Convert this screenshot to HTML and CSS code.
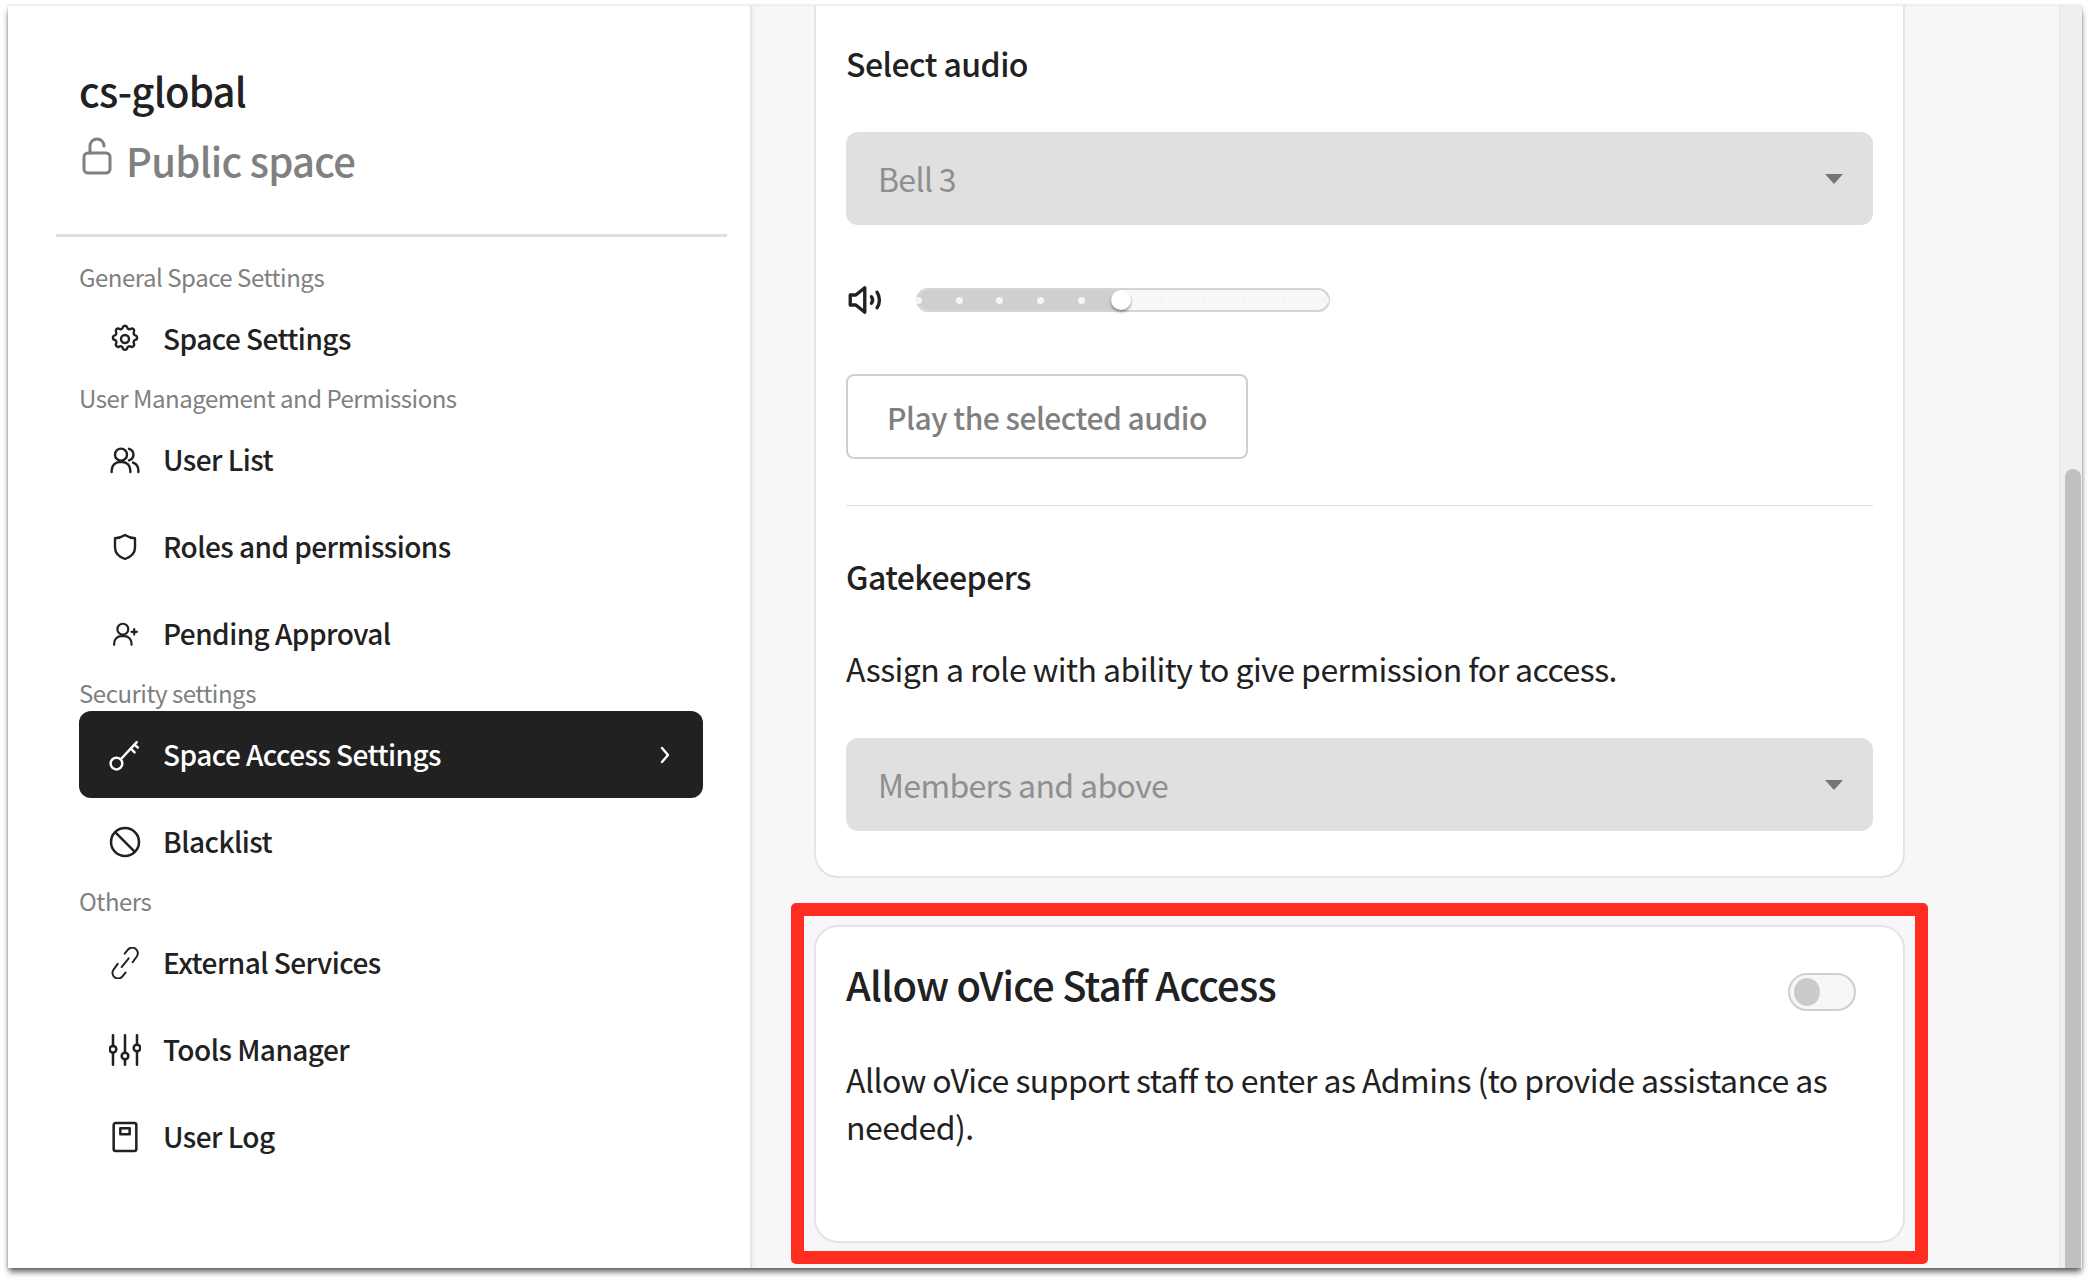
FILE: index.html
```html
<!DOCTYPE html>
<html lang="en">
<head>
<meta charset="utf-8">
<title>Space Access Settings</title>
<link rel="stylesheet" href="styles.css">
</head>
<body>
<div class="window">
  <aside class="sidebar">
    <header class="space-head">
      <div class="space-name">cs-global</div>
      <div class="space-type">
        <svg class="lock" viewBox="0 0 30 40" fill="none" stroke="currentColor" stroke-width="3" stroke-linejoin="round" stroke-linecap="round"><rect x="2" y="16" width="26" height="20" rx="4"/><path d="M8 16V9a7 7 0 0 1 14 0"/></svg>
        <span>Public space</span>
      </div>
    </header>
    <hr class="head-rule">
    <nav class="nav">
      <div class="nav-label">General Space Settings</div>
      <a class="nav-row">
        <svg class="ico" viewBox="0 0 24 24"><path d="M10.300 3.300c.4-1.700 3-1.700 3.400 0a1.700 1.700 0 0 0 2.600 1.100c1.500-.9 3.300.8 2.400 2.400a1.700 1.700 0 0 0 1 2.500c1.800.4 1.800 3 0 3.400a1.700 1.700 0 0 0-1 2.600c.9 1.500-.9 3.300-2.400 2.400a1.700 1.700 0 0 0-2.600 1c-.4 1.800-3 1.800-3.400 0a1.700 1.700 0 0 0-2.600-1c-1.500.9-3.300-.9-2.400-2.400a1.700 1.700 0 0 0-1-2.600c-1.800-.4-1.800-3 0-3.400a1.700 1.700 0 0 0 1-2.500c-.9-1.600.9-3.300 2.400-2.400a1.700 1.700 0 0 0 2.600-1.100z"/><circle cx="12" cy="12" r="3"/></svg>
        <span>Space Settings</span>
      </a>
      <div class="nav-label">User Management and Permissions</div>
      <a class="nav-row">
        <svg class="ico" viewBox="0 0 24 24"><circle cx="9" cy="8" r="4.500"/><path d="M2 21v-1.500a6 6 0 0 1 6-6h2a6 6 0 0 1 6 6V21"/><path d="M15 3.600a4.500 4.500 0 0 1 0 8.700"/><path d="M22 21v-1.500a6 6 0 0 0-4-5.600"/></svg>
        <span>User List</span>
      </a>
      <a class="nav-row">
        <svg class="ico" viewBox="0 0 24 24"><path d="M12 3c2.600 1.700 5 2.400 7.500 2.400v6.900c0 4.300-3 7-7.500 8.700-4.500-1.700-7.500-4.400-7.500-8.700V5.400C7 5.400 9.400 4.700 12 3z"/></svg>
        <span>Roles and permissions</span>
      </a>
      <a class="nav-row">
        <svg class="ico ico-small" viewBox="0 0 24 24"><circle cx="10" cy="7.500" r="5"/><path d="M2 22v-1.500a6.500 6.500 0 0 1 6.500-6.500h3a6.500 6.500 0 0 1 6.500 6.500V22"/><path d="M18 10h5M20.500 7.500v5"/></svg>
        <span>Pending Approval</span>
      </a>
      <div class="nav-label">Security settings</div>
      <a class="nav-row is-active">
        <svg class="ico ico-key" viewBox="0 0 30 30"><circle cx="7" cy="23" r="5.500"/><path d="M11 19 26 3"/><path d="M20.500 9l3.500 3.500M24 5.500l3 2.500"/></svg>
        <span>Space Access Settings</span>
        <svg class="chev" viewBox="0 0 12 20"><path d="M3 3l6 7-6 7"/></svg>
      </a>
      <a class="nav-row">
        <svg class="ico ico-lg" viewBox="0 0 24 24"><circle cx="12" cy="12" r="10.500"/><path d="M5 5l14 14"/></svg>
        <span>Blacklist</span>
      </a>
      <div class="nav-label">Others</div>
      <a class="nav-row">
        <svg class="ico ico-link" viewBox="2 1.800 20.300 20.300"><path d="M10 14.500l4.500-5.500"/><path d="M12 6l2-2.500a3.500 3.500 0 0 1 5.500 4.500l-2.500 3.500"/><path d="M12.500 18l-2 2.500A3.500 3.500 0 0 1 5 16l2.500-3.500"/></svg>
        <span>External Services</span>
      </a>
      <a class="nav-row">
        <svg class="ico ico-lg" viewBox="0 0 24 24"><path d="M3 1v8M3 14v9M12 1v13M12 19v4M21 1v7M21 13v10"/><circle cx="3" cy="11.500" r="2.500"/><circle cx="12" cy="16.500" r="2.500"/><circle cx="21" cy="10.500" r="2.500"/></svg>
        <span>Tools Manager</span>
      </a>
      <a class="nav-row">
        <svg class="ico ico-lg" viewBox="0 0 24 24"><rect x="3.500" y="1.500" width="17" height="21" rx="1.500"/><rect x="8.500" y="5.500" width="7" height="4.500"/></svg>
        <span>User Log</span>
      </a>
    </nav>
  </aside>

  <main class="main">
    <section class="card card-audio">
      <h2 class="sub-title">Select audio</h2>
      <div class="select select-first"><span>Bell 3</span><i class="caret"></i></div>
      <div class="volume">
        <svg class="speaker" viewBox="0 0 34 26" fill="none" stroke="currentColor" stroke-width="3" stroke-linejoin="round" stroke-linecap="round"><path d="M2 8.500h5L15 2v22l-8-6.500H2z"/><path d="M21 10c1.300 1.800 1.300 4.200 0 6"/><path d="M26 6c2.800 4 2.800 10 0 14"/></svg>
        <div class="slider">
          <div class="slider-fill"></div>
          <div class="slider-dots"><i></i><i></i><i></i><i></i><i></i><i></i><i></i><i></i><i></i><i></i><i></i></div>
          <div class="slider-thumb"></div>
        </div>
      </div>
      <button class="play" type="button">Play the selected audio</button>
      <hr class="card-rule">
      <h2 class="sub-title gate-title">Gatekeepers</h2>
      <p class="gate-text">Assign a role with ability to give permission for access.</p>
      <div class="select select-gate"><span>Members and above</span><i class="caret"></i></div>
    </section>

    <section class="card card-staff">
      <div class="highlight"></div>
      <div class="staff-head">
        <h2 class="staff-title">Allow oVice Staff Access</h2>
        <div class="toggle"><i></i></div>
      </div>
      <p class="staff-text">Allow oVice support staff to enter as Admins (to provide assistance as needed).</p>
    </section>
  </main>

  <div class="scrollbar"><div class="scroll-thumb"></div></div>
</div>
</body>
</html>
```

FILE: styles.css
```css
* { box-sizing: border-box; }
html, body { height: 100%; }
body {
  margin: 0;
  padding: 6px 14px 16px 8px;
  background: #fff;
  overflow: hidden;
  font-family: "Noto Sans CJK JP", "Noto Sans", sans-serif;
  color: #212121;
}
.window {
  display: flex;
  height: 1262px;
  background: #f7f7f9;
  box-shadow: 0 5px 6px -1px rgba(0,0,0,.6), 0 0 3px rgba(0,0,0,.22);
  overflow: hidden;
}
.sidebar {
  flex: 0 0 744px;
  background: #fff;
  border-right: 2px solid #e4e4e6;
  box-shadow: 2px 0 4px rgba(0,0,0,.05);
}
.space-head { padding: 56px 0 0 71px; }
.space-name { font-size: 40px; line-height: 56px; font-weight: 500; letter-spacing: -.75px; }
.space-type {
  display: flex;
  align-items: center;
  gap: 14px;
  margin-top: 14px;
  font-size: 40px;
  line-height: 56px;
  font-weight: 500;
  letter-spacing: -.75px;
  color: #808080;
}
.lock { width: 30px; height: 40px; margin: -6px 0 0 3px; }
.head-rule {
  margin: 46px 0 0 48px;
  width: 671px;
  height: 3px;
  border: 0;
  background: #e0e0e0;
}
.nav { padding: 24px 47px 0 71px; }
.nav-label {
  height: 34px;
  font-size: 24px;
  line-height: 31px;
  letter-spacing: -.48px;
  color: #808080;
}
.nav-row {
  display: flex;
  align-items: center;
  height: 87px;
  padding: 0 32px 0 30px;
  border-radius: 12px;
  font-size: 28px;
  font-weight: 500;
  letter-spacing: -.55px;
}
.nav-row span { flex: 1; margin: -2px 0 0 22px; }
.ico {
  width: 32px;
  height: 32px;
  margin-top: 1px;
  fill: none;
  stroke: currentColor;
  stroke-width: 1.8;
  stroke-linecap: round;
  stroke-linejoin: round;
}
.ico-small { padding: 3px; stroke-width: 2; }
.ico-lg { stroke-width: 1.9; }
.ico-key { stroke-width: 2.3; }
.ico-link { stroke-width: 1.25; }
.is-active { background: #212121; color: #fff; }
.chev {
  width: 12px;
  height: 20px;
  fill: none;
  stroke: currentColor;
  stroke-width: 2.4;
  stroke-linecap: round;
  stroke-linejoin: round;
}
.main {
  flex: 1;
  min-width: 0;
  padding: 0 0 0 62px;
  overflow: hidden;
}
.card {
  position: relative;
  width: 1091px;
  padding: 0 30px;
  background: #fff;
  border: 2px solid #e4e4e6;
}
.card-audio {
  height: 872px;
  padding-top: 37px;
  border-top: 0;
  border-radius: 0 0 24px 24px;
}
.sub-title { margin: 0; font-size: 32px; line-height: 40px; font-weight: 500; letter-spacing: -.55px; }
.select {
  display: flex;
  align-items: center;
  justify-content: space-between;
  width: 1027px;
  height: 93px;
  padding: 0 30px 0 32px;
  border-radius: 12px;
  background: #e0e0e0;
  color: #8f8f8f;
  font-size: 32px;
  letter-spacing: -.65px;
}
.select span { margin-top: -2px; }
.select-first { margin-top: 49px; }
.caret {
  width: 0;
  height: 0;
  margin-top: 1px;
  border-left: 9px solid transparent;
  border-right: 9px solid transparent;
  border-top: 10px solid #757575;
}
.volume { display: flex; align-items: center; height: 36px; margin-top: 57px; }
.speaker { width: 38px; height: 30px; margin-left: 2px; color: #212121; }
.slider {
  position: relative;
  width: 414px;
  height: 24px;
  margin-left: 30px;
  border: 2px solid #d4d4d4;
  border-radius: 12px;
  background: #f8f8f8;
}
.slider-fill {
  width: 204px;
  height: 100%;
  border-radius: 10px 0 0 10px;
  background: #d0ced0;
}
.slider-dots {
  position: absolute;
  inset: 0 -1px 0 -3px;
  display: flex;
  align-items: center;
  justify-content: space-between;
}
.slider-dots i { width: 7px; height: 7px; border-radius: 50%; background: #f5f5f5; }
.slider-thumb {
  position: absolute;
  top: 0;
  left: 193px;
  width: 20px;
  height: 20px;
  border-radius: 50%;
  background: #fff;
  box-shadow: 0 2px 3px rgba(0,0,0,.4);
}
.play {
  display: block;
  width: 402px;
  height: 85px;
  margin-top: 56px;
  padding: 0;
  border: 2px solid #cfcfcf;
  border-radius: 8px;
  background: #fff;
  color: #808080;
  font: 500 30px "Noto Sans CJK JP", "Noto Sans", sans-serif;
  letter-spacing: -.5px;
}
.card-rule { width: 1027px; height: 1px; margin: 46px 0 0; border: 0; background: #dcdcdc; }
.gate-title { margin-top: 50px; }
.gate-text { margin: 49px 0 0; font-size: 32px; line-height: 46px; letter-spacing: -.55px; }
.select-gate { margin-top: 47px; }
.card-staff {
  height: 318px;
  margin-top: 47px;
  padding-top: 30px;
  border-radius: 24px;
}
.highlight {
  position: absolute;
  inset: -24px -25px -23px -25px;
  border: 13px solid #ff2d1f;
  border-radius: 5px;
  pointer-events: none;
}
.staff-head {
  display: flex;
  align-items: center;
  justify-content: space-between;
  width: 1010px;
  height: 70px;
}
.staff-title { margin: -17px 0 0; font-size: 40px; line-height: 56px; font-weight: 500; letter-spacing: -.78px; }
.toggle {
  width: 68px;
  height: 38px;
  padding: 3px 4px;
  border: 2px solid #cfcfcf;
  border-radius: 19px;
  background: #f7f7f9;
}
.toggle i { display: block; width: 26px; height: 28px; border-radius: 50%; background: #cbcbcb; }
.staff-text { width: 1027px; margin: 29px 0 0; font-size: 32px; line-height: 47px; letter-spacing: -.56px; }
.scrollbar {
  flex: 0 0 23px;
  height: 100%;
  padding: 463px 1px 0 5px;
  background: #efefef;
  border-left: 1px solid #e6e6e6;
}
.scroll-thumb { height: 100%; border-radius: 9px 9px 0 0; background: #c0c0c0; }
```
